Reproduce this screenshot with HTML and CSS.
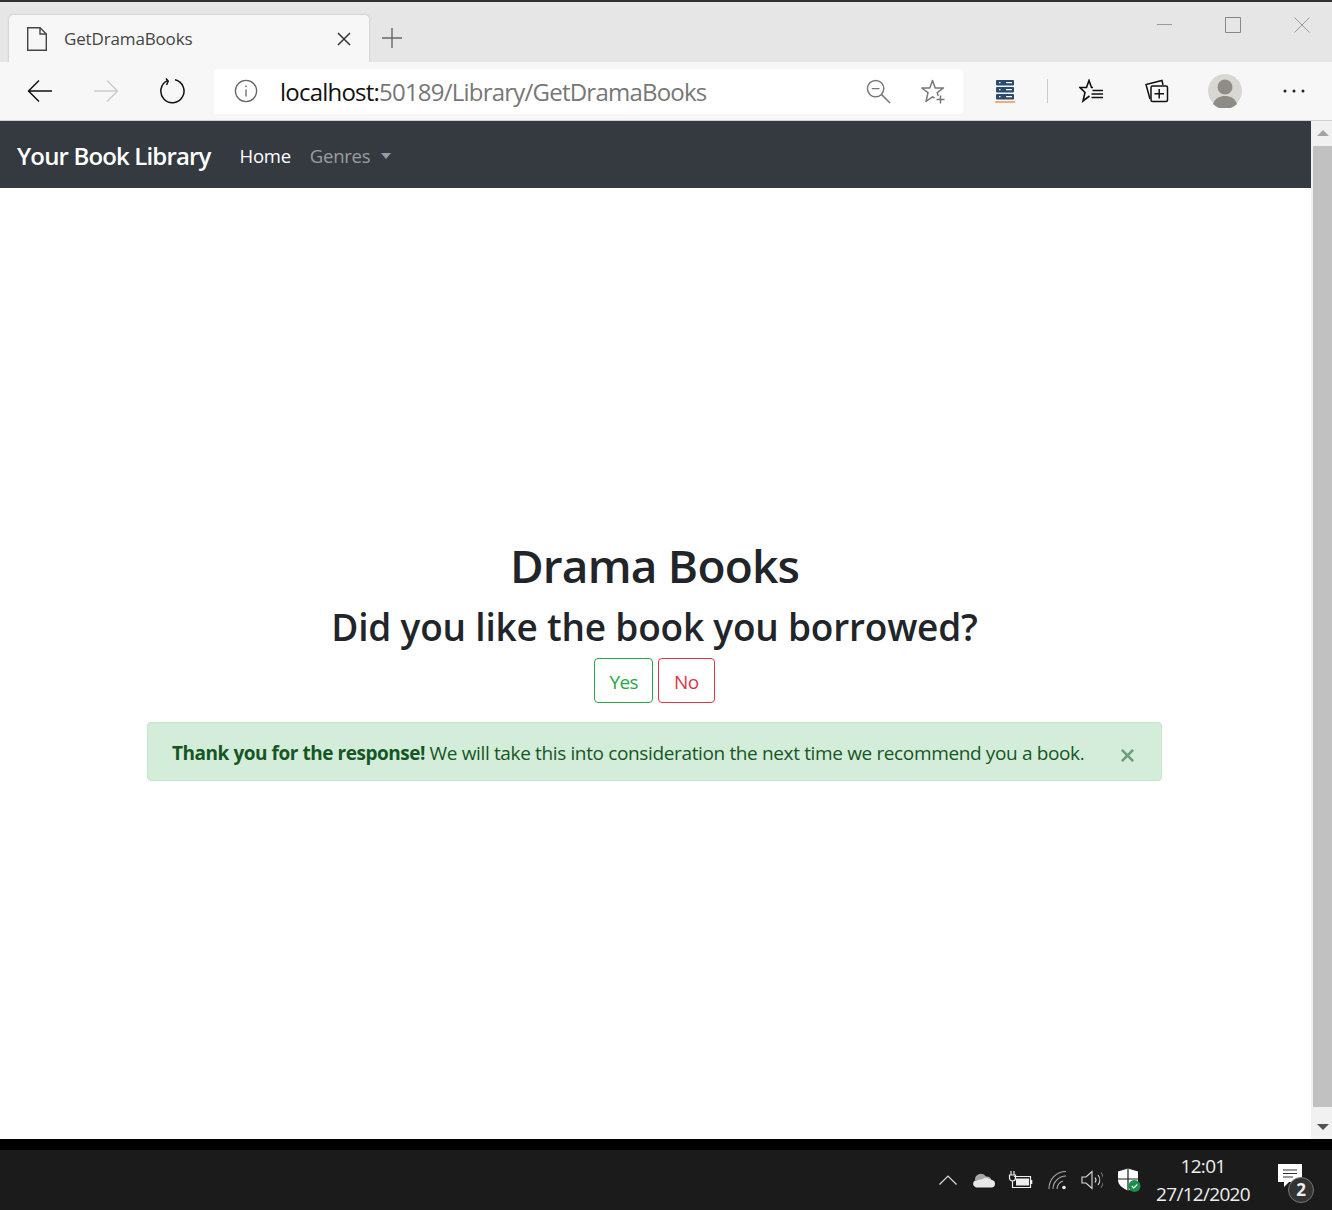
FILE: index.html
```html
<!DOCTYPE html>
<html lang="en">
<head>
    <meta charset="UTF-8">
    <meta name="viewport" content="width=device-width, initial-scale=1.0">
    <title>GetDramaBooks</title>
    <link rel="stylesheet" href="styles.css">
</head>
<body>
    <div class="tab-strip">
        <div class="tab">
            <svg class="tab-icon" width="20" height="24" viewBox="0 0 20 24" fill="none" stroke="#444" stroke-width="1.4"><path d="M.7.7H13L19.300 7V23.300H.7Z"/><path d="M13 .7V7H19.300"/></svg>
            <span class="tab-title">GetDramaBooks</span>
            <svg class="tab-close" width="14" height="14" viewBox="0 0 14 14" stroke="#333" stroke-width="1.5"><path d="M1 1L13 13M13 1L1 13"/></svg>
        </div>
        <svg class="new-tab" width="20" height="20" viewBox="0 0 20 20" stroke="#666" stroke-width="1.4"><path d="M10 0V20M0 10H20"/></svg>
        <div class="window-controls">
            <svg width="16" height="16" viewBox="0 0 16 16" stroke="#999" stroke-width="1"><path d="M1 7.500H16"/></svg>
            <svg width="16" height="16" viewBox="0 0 16 16" fill="none" stroke="#888" stroke-width="1"><path d="M.5.5H15.500V15.500H.5Z"/></svg>
            <svg width="16" height="16" viewBox="0 0 16 16" stroke="#999" stroke-width="1"><path d="M.5.5L15.500 15.500M15.500.5L.5 15.500"/></svg>
        </div>
    </div>

    <div class="toolbar">
        <svg class="nav-back" width="26" height="24" viewBox="0 0 26 24" fill="none" stroke="#111" stroke-width="1.5"><path d="M25 12H2M12 1.500L1.500 12L12 22.500"/></svg>
        <svg class="nav-forward" width="26" height="24" viewBox="0 0 26 24" fill="none" stroke="#ccc" stroke-width="1.5"><path d="M1 12H24M14 1.500L24.500 12L14 22.500"/></svg>
        <svg class="nav-reload" width="26" height="26" viewBox="0 0 26 26" fill="none" stroke="#111" stroke-width="1.5"><path d="M8.500 2.600A11.600 11.600 0 1 0 16 1.800"/><path d="M7 .5L9.200 3.200L7.500 7"/></svg>
        <div class="address-bar">
            <svg class="info-icon" width="24" height="24" viewBox="0 0 24 24" fill="none" stroke="#666" stroke-width="1.3"><circle cx="12" cy="12" r="10.600"/><path d="M12 10.500V17.500M12 6.500V8.200"/></svg>
            <span class="url"><span class="url-host">localhost:</span>50189/Library/GetDramaBooks</span>
            <svg class="zoom-icon" width="25" height="25" viewBox="0 0 26 26" fill="none" stroke="#777" stroke-width="1.5"><circle cx="10" cy="10" r="8.500"/><path d="M16 16L25 25M6 10H14"/></svg>
            <svg class="star-add" width="25" height="25" viewBox="0 0 25 25" fill="none" stroke="#777" stroke-width="1.5" stroke-linejoin="round"><path d="M17.200 17L16.200 13.600L22.500 9H14.200L11.500 1.500L8.800 9H.8L7 13.600L5 22.500L11.500 17.800L13.500 19"/><path d="M19.500 16.500V24.500M15.500 20.500H23.500"/></svg>
        </div>
        <svg class="server-icon" width="20" height="24" viewBox="0 0 20 24"><rect x="1" y="1" width="18" height="5.500" rx="1" fill="#2b4a6f"/><rect x="1" y="8" width="18" height="5.500" rx="1" fill="#2b4a6f"/><rect x="1" y="15" width="18" height="5.500" rx="1" fill="#2b4a6f"/><path d="M4 3.700H5.500M4 10.700H5.500M4 17.700H5.500M11 3.700H17M11 10.700H17M11 17.700H17" stroke="#fff" stroke-width="1.2"/><path d="M0 23H20" stroke="#f39a4a" stroke-width="1.6"/></svg>
        <span class="toolbar-divider"></span>
        <svg class="fav-icon" width="24" height="24" viewBox="0 0 24 24" fill="none" stroke="#111" stroke-width="1.6"><path d="M14 8.500H12.500L10 1.500L7.500 8.500H1L6 13.500L4 22L10.500 17"/><path d="M13.500 11.500H24M12.500 15H24M12.500 18.500H24" stroke-width="1.400"/></svg>
        <svg class="collections-icon" width="24" height="24" viewBox="0 0 24 24" fill="none" stroke="#111" stroke-width="1.5"><path d="M5 20L1 5.500L17 1.500L18 6"/><rect x="6" y="7" width="16.500" height="15.500" rx="1.500" fill="#f7f7f7"/><path d="M14.200 10V19.500M9.500 14.700H19"/></svg>
        <svg class="avatar" width="34" height="34" viewBox="0 0 34 34"><circle cx="17" cy="17" r="17" fill="#d8d7d3"/><circle cx="17" cy="13" r="7.500" fill="#8f8c88"/><path d="M5 30C7 24 12 22 17 22S27 24 29 30A17 17 0 0 1 5 30Z" fill="#8f8c88"/></svg>
        <svg class="more-icon" width="22" height="4" viewBox="0 0 22 4" fill="#222"><circle cx="2" cy="2" r="1.500"/><circle cx="11" cy="2" r="1.500"/><circle cx="20" cy="2" r="1.500"/></svg>
    </div>

    <div class="viewport">
        <div class="page">
            <nav class="navbar">
                <a class="brand">Your Book Library</a>
                <a class="nav-link active">Home</a>
                <a class="nav-link">Genres<span class="caret"></span></a>
            </nav>
            <main class="content">
                <h1>Drama Books</h1>
                <h2>Did you like the book you borrowed?</h2>
                <div class="answers">
                    <button class="btn btn-yes">Yes</button>
                    <button class="btn btn-no">No</button>
                </div>
                <div class="alert">
                    <span><strong>Thank you for the response!</strong> We will take this into consideration the next time we recommend you a book.</span>
                    <svg class="alert-close" width="13" height="13" viewBox="0 0 12 12" stroke="#6f9b7d" stroke-width="2.400"><path d="M.8.8L11.200 11.200M11.200.8L.8 11.200"/></svg>
                </div>
            </main>
        </div>
        <div class="scrollbar">
            <span class="arrow-up"></span>
            <div class="thumb"></div>
            <span class="arrow-down"></span>
        </div>
    </div>

    <div class="taskbar">
        <svg width="18" height="10" viewBox="0 0 18 10" fill="none" stroke="#ddd" stroke-width="1.2"><path d="M.5 9.500L9 1L17.500 9.500"/></svg>
        <svg class="tray-cloud" width="24" height="16" viewBox="0 0 24 16"><path d="M3 8A6 6 0 0 1 14 4.500A5 5 0 0 1 19.500 8Z" fill="#a8a8a8"/><path d="M4 15.500A3.800 3.800 0 0 1 3 8.500L9 7.500L14 5.500L19.500 8A3.800 3.800 0 0 1 20 15.500Z" fill="#e8e8e8"/></svg>
        <svg class="tray-power" width="25" height="18" viewBox="0 0 25 18" fill="none" stroke="#eee" stroke-width="1.2"><path d="M3 0V4M6 0V4M1.500 4H7.500V7A3 3 0 0 1 1.500 7ZM4.500 10V14"/><path d="M6 5.500H22.500V16.500H4.500V14"/><rect x="8" y="7.500" width="13" height="7" fill="#eee" stroke="none"/><path d="M23.500 9V13" stroke-width="1.600"/></svg>
        <svg class="tray-wifi" width="20" height="20" viewBox="0 0 20 20" fill="none" stroke="#aaa" stroke-width="1.100"><path d="M1 19A17 17 0 0 1 18 1.500M5 19A13 13 0 0 1 18 6M9 19A9 9 0 0 1 15 11"/><circle cx="16" cy="17.500" r="1.800" fill="#eee" stroke="none"/></svg>
        <svg class="tray-sound" width="22" height="20" viewBox="0 0 22 20" fill="none" stroke="#ddd" stroke-width="1.100"><path d="M1 7H5L11 1.500V18.500L5 13H1Z"/><path d="M14 7.500A4 4 0 0 1 14 12.500M17 5A8 8 0 0 1 17 15"/><path d="M20 2.500A12 12 0 0 1 20 17.500" stroke="#777"/></svg>
        <svg class="tray-shield" width="24" height="24" viewBox="0 0 24 24"><path d="M11 .5L21 3.500V12C21 17 16 20.500 11 22.500C6 20.500 1 17 1 12V3.500Z" fill="#fff"/><path d="M11 .5V22.500M1 11H21" stroke="#1c1c1c" stroke-width="1.200"/><circle cx="17.500" cy="18" r="6" fill="#1a8f4a"/><path d="M14.800 18L16.800 20L20.300 16.500" fill="none" stroke="#fff" stroke-width="1.100"/></svg>
        <div class="clock">
            <span>12:01</span>
            <span>27/12/2020</span>
        </div>
        <div class="notify">
            <svg width="24" height="24" viewBox="0 0 24 24"><path d="M0 0H24V18H11L6 23V18H0Z" fill="#fff"/><path d="M5 6H19M5 9.500H19M5 13H15" stroke="#333" stroke-width="1"/></svg>
            <span class="notify-count">2</span>
        </div>
    </div>
</body>
</html>
```

FILE: styles.css
```css
body {
    font-family: "Open Sans", "Noto Sans", sans-serif;
    margin: 0;
    padding: 0;
    width: 1332px;
    height: 1210px;
    overflow: hidden;
    background-color: #000;
    display: flex;
    flex-direction: column;
}

.tab-strip {
    height: 60px;
    border-top: 2px solid #333;
    background-color: #e6e6e6;
    display: flex;
    align-items: flex-end;
    padding-left: 9px;
}

.tab {
    width: 360px;
    height: 47px;
    background-color: #f7f7f7;
    border-radius: 4px 4px 0 0;
    box-shadow: 0 0 2px rgba(0, 0, 0, 0.25);
    display: flex;
    align-items: center;
    padding: 0 18px;
    box-sizing: border-box;
}

.tab-title {
    font-size: 17px;
    color: #444;
    margin-left: 17px;
    letter-spacing: -0.15px;
    flex: 1;
}

.new-tab {
    margin: 0 0 14px 13px;
}

.window-controls {
    margin-left: auto;
    align-self: flex-start;
    display: flex;
    gap: 53px;
    padding: 15px 22px 0 0;
}

.toolbar {
    height: 58px;
    border-bottom: 1px solid #d0d0d0;
    background-color: #f7f7f7;
    display: flex;
    align-items: center;
    padding-left: 27px;
}

.nav-forward {
    margin-left: 40px;
}

.nav-reload {
    margin-left: 40px;
}

.address-bar {
    width: 749px;
    height: 45px;
    margin-left: 29px;
    background-color: white;
    border-radius: 4px;
    display: flex;
    align-items: center;
    padding-left: 20px;
    box-sizing: border-box;
}

.url {
    font-size: 24px;
    color: #777;
    margin-left: 22px;
    letter-spacing: -0.78px;
    flex: 1;
}

.url-host {
    color: #111;
}

.star-add {
    margin: 0 17px 0 30px;
}

.server-icon {
    margin-left: 32px;
}

.toolbar-divider {
    width: 1px;
    height: 24px;
    background-color: #ccc;
    margin-left: 32px;
}

.fav-icon {
    margin-left: 31px;
}

.collections-icon {
    margin-left: 42px;
}

.avatar {
    margin-left: 39px;
}

.more-icon {
    margin-left: 41px;
}

.viewport {
    height: 1018px;
    background: white;
    display: flex;
}

.page {
    flex: 1;
}

.navbar {
    height: 67px;
    background-color: #343a40;
    display: flex;
    align-items: center;
    padding-left: 17px;
}

.brand {
    font-size: 24px;
    font-weight: 600;
    color: white;
    letter-spacing: -0.85px;
    margin: 2px 29px 0 0;
}

.nav-link {
    font-size: 18.5px;
    color: rgba(255, 255, 255, 0.5);
    letter-spacing: -0.25px;
    margin: 2px 19px 0 0;
}

.nav-link.active {
    color: white;
}

.caret {
    display: inline-block;
    margin-left: 11px;
    vertical-align: 4px;
    border-top: 6px solid;
    border-left: 5.5px solid transparent;
    border-right: 5.5px solid transparent;
}

.content {
    padding: 348px 149px 0 147px;
    text-align: center;
    color: #212529;
}

h1 {
    font-size: 46px;
    font-weight: 600;
    line-height: 58px;
    margin: 0;
    letter-spacing: -0.8px;
}

h2 {
    font-size: 37px;
    font-weight: 600;
    line-height: 46px;
    margin: 10px 0 8px;
    letter-spacing: -0.2px;
}

.answers {
    display: flex;
    justify-content: center;
    gap: 5px;
}

.btn {
    font-family: inherit;
    font-size: 19px;
    height: 45px;
    padding: 2px 14px 0;
    background: white;
    border-radius: 4px;
    letter-spacing: -0.6px;
}

.btn-yes {
    border: 1px solid #28a745;
    color: #28a745;
}

.btn-no {
    border: 1px solid #dc3545;
    color: #dc3545;
    padding: 2px 15px 0;
}

.alert {
    margin-top: 19px;
    height: 59px;
    box-sizing: border-box;
    background-color: #d4edda;
    border: 1px solid #c3e6cb;
    border-radius: 4px;
    color: #155724;
    display: flex;
    align-items: center;
    justify-content: space-between;
    padding: 2px 27px 0 24px;
    font-size: 19px;
    letter-spacing: -0.36px;
}

.alert strong {
    letter-spacing: -0.46px;
}

.alert-close {
    margin-top: 5px;
}

.scrollbar {
    width: 21px;
    background-color: #f1f1f1;
    display: flex;
    flex-direction: column;
    align-items: flex-end;
}

.arrow-up, .arrow-down {
    width: 0;
    height: 0;
    margin: 9px 3px 9px 0;
    border-left: 6px solid transparent;
    border-right: 6px solid transparent;
}

.arrow-up {
    border-bottom: 6px solid #a3a3a3;
    margin-bottom: 10px;
}

.arrow-down {
    border-top: 6px solid #505050;
    margin-top: 17px;
}

.thumb {
    width: 19px;
    flex: 1;
    background-color: #c1c1c1;
}

.taskbar {
    margin-top: 11px;
    height: 60px;
    background-color: #1b1b1b;
    display: flex;
    align-items: center;
    padding-left: 939px;
    color: #eee;
}

.tray-cloud {
    margin-left: 15px;
}

.tray-power {
    margin-left: 12px;
}

.tray-wifi {
    margin-left: 15px;
}

.tray-sound {
    margin-left: 13px;
}

.tray-shield {
    margin-left: 14px;
}

.clock {
    width: 120px;
    margin-left: 2px;
    display: flex;
    flex-direction: column;
    align-items: center;
    font-size: 19px;
    line-height: 28px;
    letter-spacing: -0.7px;
}

.notify {
    position: relative;
    margin-left: 15px;
    margin-top: -3px;
}

.notify-count {
    position: absolute;
    left: 10px;
    top: 13px;
    width: 24px;
    height: 24px;
    border: 1px solid #777;
    border-radius: 50%;
    background-color: #333;
    font-size: 17px;
    font-weight: 700;
    line-height: 24px;
    text-align: center;
}
```
